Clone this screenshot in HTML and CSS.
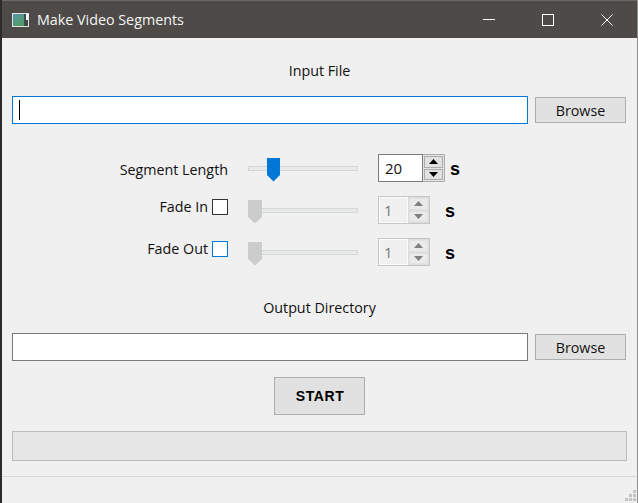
FILE: index.html
```html
<!DOCTYPE html>
<html lang="en">
<head>
  <meta charset="UTF-8">
  <title>Make Video Segments</title>
  <link rel="stylesheet" href="styles.css">
</head>
<body>

  <div class="window">
    <span class="edge-mark"></span>

    <!-- Title bar -->
    <div class="titlebar">
      <svg class="app-icon" width="17" height="14" viewBox="0 0 17 14">
        <defs>
          <linearGradient id="pic" x1="0" y1="0" x2="0.4" y2="1">
            <stop offset="0" stop-color="#5b95ab"/>
            <stop offset="1" stop-color="#4f9c68"/>
          </linearGradient>
        </defs>
        <rect width="17" height="14" fill="#dfe4e4"/>
        <rect x="1" y="1" width="11" height="12" fill="url(#pic)"/>
        <rect x="12" y="1" width="4" height="12" fill="#3f4a4c"/>
        <rect x="14" y="1" width="2" height="6" fill="#f6f6f6"/>
      </svg>
      <span class="title">Make Video Segments</span>
      <div class="win-buttons">
        <svg width="12" height="12" viewBox="0 0 12 12"><path d="M0 5.5H12" stroke="#fff" fill="none"/></svg>
        <svg width="12" height="12" viewBox="0 0 12 12"><rect x="0.5" y="0.5" width="11" height="11" stroke="#fff" fill="none"/></svg>
        <svg width="12" height="12" viewBox="0 0 12 12"><path d="M0.5 0.5L11.5 11.5M11.5 0.5L0.5 11.5" stroke="#fff" fill="none"/></svg>
      </div>
    </div>

    <div class="content">

      <div class="heading">Input File</div>
      <div class="file-row">
        <div class="text-field focused"><span class="caret"></span></div>
        <button class="btn browse">Browse</button>
      </div>

      <!-- Sliders -->
      <div class="settings">
        <div class="setting first">
          <div class="name name-plain">Segment Length</div>
          <div class="slider">
            <svg class="thumb thumb-20" width="14" height="24" viewBox="0 0 14 24"><path d="M0 0H13V17L6.5 23.5L0 17Z" fill="#0078d7"/></svg>
          </div>
          <div class="spin on">
            <div class="spin-value">20</div>
            <div class="spin-arrows">
              <div class="arrow"><svg width="9" height="5" viewBox="0 0 9 5"><path d="M4.5 0L9 5H0Z" fill="#000"/></svg></div>
              <div class="arrow"><svg width="9" height="5" viewBox="0 0 9 5"><path d="M0 0H9L4.5 5Z" fill="#000"/></svg></div>
            </div>
          </div>
          <div class="unit unit-first">s</div>
        </div>

        <div class="setting">
          <div class="name name-check"><span>Fade In</span><span class="check"></span></div>
          <div class="slider off">
            <svg class="thumb" width="14" height="24" viewBox="0 0 14 24"><path d="M0 0H14V17L7 23.5L0 17Z" fill="#cccccc"/></svg>
          </div>
          <div class="spin off">
            <div class="spin-value">1</div>
            <div class="spin-arrows">
              <div class="arrow"><svg width="9" height="5" viewBox="0 0 9 5"><path d="M4.5 0L9 5H0Z" fill="#7f7f7f"/></svg></div>
              <div class="arrow"><svg width="9" height="5" viewBox="0 0 9 5"><path d="M0 0H9L4.5 5Z" fill="#7f7f7f"/></svg></div>
            </div>
          </div>
          <div class="unit">s</div>
        </div>

        <div class="setting">
          <div class="name name-check"><span>Fade Out</span><span class="check hover"></span></div>
          <div class="slider off">
            <svg class="thumb" width="14" height="24" viewBox="0 0 14 24"><path d="M0 0H14V17L7 23.5L0 17Z" fill="#cccccc"/></svg>
          </div>
          <div class="spin off">
            <div class="spin-value">1</div>
            <div class="spin-arrows">
              <div class="arrow"><svg width="9" height="5" viewBox="0 0 9 5"><path d="M4.5 0L9 5H0Z" fill="#7f7f7f"/></svg></div>
              <div class="arrow"><svg width="9" height="5" viewBox="0 0 9 5"><path d="M0 0H9L4.5 5Z" fill="#7f7f7f"/></svg></div>
            </div>
          </div>
          <div class="unit">s</div>
        </div>
      </div>

      <div class="heading output">Output Directory</div>
      <div class="file-row">
        <div class="text-field"></div>
        <button class="btn browse">Browse</button>
      </div>

      <div class="start-row">
        <button class="btn start">START</button>
      </div>

      <div class="progress"></div>
    </div>

    <!-- Status bar -->
    <div class="statusbar">
      <svg class="grip" width="12" height="12" viewBox="0 0 12 12" fill="#c4c4c4">
        <rect x="8" y="0" width="3" height="3"/>
        <rect x="4" y="4" width="3" height="3"/>
        <rect x="8" y="4" width="3" height="3"/>
        <rect x="0" y="8" width="3" height="3"/>
        <rect x="4" y="8" width="3" height="3"/>
        <rect x="8" y="8" width="3" height="3"/>
      </svg>
    </div>
  </div>

</body>
</html>
```

FILE: styles.css
```css
html, body {
  margin: 0;
  padding: 0;
  background: #f0f0f0;
}
.window {
  position: relative;
  width: 638px;
  height: 503px;
  box-sizing: border-box;
  border-left: 2px solid #2b2b2b;
  border-right: 1px solid #8f8f8f;
  display: flex;
  flex-direction: column;
  overflow: hidden;
  background: #f0f0f0;
  font-family: "Open Sans", "Noto Sans", sans-serif;
  font-size: 14.3px;
  color: #111;
}
/* bit of the window behind, shows through the edge */
.edge-mark {
  position: absolute;
  left: -2px;
  top: 446px;
  width: 2px;
  height: 7px;
  background: #3f8fdc;
}

/* title bar */
.titlebar {
  height: 38px;
  box-sizing: border-box;
  border-top: 1px solid #6a6966;
  background: #4d4a47;
  color: #fff;
  display: flex;
  align-items: center;
  flex-shrink: 0;
}
.app-icon {
  margin-left: 10px;
}
.title {
  margin-left: 8px;
  color: #f4f4f4;
}
.win-buttons {
  margin-left: auto;
  display: flex;
  gap: 47px;
  margin-right: 24px;
}

/* main */
.content {
  flex: 1;
  padding: 0 10px;
}
.heading {
  text-align: center;
  height: 20px;
  line-height: 20px;
  margin-top: 23px;
  margin-bottom: 15px;
  box-sizing: border-box;
}
.heading.output {
  margin-top: 32px;
}
.file-row {
  display: flex;
  align-items: center;
  gap: 7px;
}
.text-field {
  width: 516px;
  height: 28px;
  box-sizing: border-box;
  border: 1px solid #7a7a7a;
  background: #fff;
  padding: 3px 6px;
}
.text-field.focused {
  border-color: #0078d7;
}
.caret {
  display: block;
  width: 1px;
  height: 20px;
  background: #000;
}
.btn {
  font-family: inherit;
  font-size: 14.3px;
  color: #111;
  background: #e1e1e1;
  border: 1px solid #adadad;
  padding: 0;
}
.browse {
  width: 91px;
  height: 26px;
}

/* slider rows */
.settings {
  margin-top: 30px;
}
.setting {
  display: flex;
  height: 28px;
  margin-top: 14px;
  align-items: center;
}
.setting.first {
  margin-top: 0;
}
.name {
  width: 216px;
  text-align: right;
}
.name-plain {
  padding-top: 2px;
}
.name-check {
  display: flex;
  justify-content: flex-end;
  gap: 4px;
  align-self: flex-start;
  align-items: center;
  height: 20px;
}
.check {
  width: 16px;
  height: 16px;
  box-sizing: border-box;
  margin-top: 1px;
  border: 1px solid #333;
  background: #fff;
}
.check.hover {
  border-color: #0078d7;
}
.slider {
  position: relative;
  width: 110px;
  height: 5px;
  box-sizing: border-box;
  margin-left: 20px;
  background: #e7eaea;
  border: 1px solid #d6d6d6;
}
.thumb {
  position: absolute;
  top: -9px;
  left: -1px;
}
.thumb-20 {
  left: 18px;
  top: -9px;
}
.spin {
  margin-left: 20px;
  width: 52px;
  height: 28px;
  box-sizing: border-box;
  display: flex;
  border: 1px solid #adadad;
}
.spin.on {
  width: 67px;
}
.spin-value {
  flex: 1;
  box-sizing: border-box;
  background: #fff;
  border: 1px solid #7a7a7a;
  margin: -1px 0 -1px -1px;
  padding-left: 6px;
  font-size: 15px;
  line-height: 26px;
}
.spin-arrows {
  width: 21px;
  display: flex;
  flex-direction: column;
  justify-content: center;
  gap: 1px;
  padding: 1px;
  box-sizing: border-box;
  background: #e4e4e4;
}
.arrow {
  flex: 1;
  background: #e1e1e1;
  border: 1px solid #adadad;
  display: flex;
  align-items: center;
  justify-content: center;
}
.spin.off {
  border-color: #c6c6c6;
}
.spin.off .spin-value {
  margin: 0;
  background: #f0f0f0;
  border: 1px solid #fbfbfb;
  color: #7a7a7a;
  padding-left: 4px;
  line-height: 24px;
}
.spin.off .arrow {
  background: #eaeaea;
  border-color: #e2e2e2;
}
.spin.off .spin-arrows {
  background: #dcdcdc;
}
.unit {
  margin-left: 15px;
  padding-top: 3px;
  font-family: "Liberation Sans", sans-serif;
  font-size: 18px;
  font-weight: bold;
  color: #000;
}
.unit-first {
  margin-left: 5px;
  padding-top: 2px;
}

.start-row {
  display: flex;
  justify-content: center;
  margin-top: 16px;
}
.start {
  width: 91px;
  height: 38px;
  padding: 0 0 1px 1px;
  font-family: "Liberation Sans", sans-serif;
  font-size: 14px;
  font-weight: bold;
  letter-spacing: 0.6px;
  color: #000;
}
.progress {
  width: 615px;
  height: 30px;
  box-sizing: border-box;
  margin-top: 16px;
  background: #e6e6e6;
  border: 1px solid #bcbcbc;
}

/* status bar */
.statusbar {
  height: 26px;
  flex-shrink: 0;
  border-top: 1px solid #d7d7d7;
  display: flex;
  justify-content: flex-end;
  align-items: flex-end;
}
.grip {
  margin: 0 0 1px 0;
}
```
